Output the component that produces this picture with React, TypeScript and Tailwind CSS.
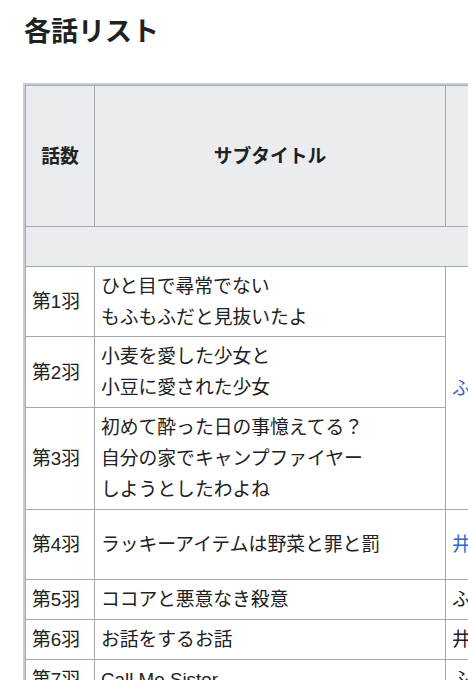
import React from 'react';

type Ep = {
    no: string;
    lines: string[];
    h: number;
};

const episodes: Ep[] = [
    { no: '第1羽', lines: ['ひと目で尋常でない', 'もふもふだと見抜いたよ'], h: 70 },
    { no: '第2羽', lines: ['小麦を愛した少女と', '小豆に愛された少女'], h: 71 },
    { no: '第3羽', lines: ['初めて酔った日の事憶えてる？', '自分の家でキャンプファイヤー', 'しようとしたわよね'], h: 102 },
    { no: '第4羽', lines: ['ラッキーアイテムは野菜と罪と罰'], h: 70 },
    { no: '第5羽', lines: ['ココアと悪意なき殺意'], h: 40 },
    { no: '第6羽', lines: ['お話をするお話'], h: 40 },
    { no: '第7羽', lines: ['Call Me Sister'], h: 40 },
];

// writer column, null where a rowspan above covers it
const writers: ({ name: string; link: boolean; span?: number } | null)[] = [
    { name: 'ふでやすかずゆき', link: true, span: 3 },
    null,
    null,
    { name: '井上美緒', link: true },
    { name: 'ふでやすかずゆき', link: false },
    { name: '井上美緒', link: false },
    { name: 'ふでやすかずゆき', link: false },
];

const cell = 'border border-[#a2a9b1] px-[6px] py-0 align-middle';

export default function App() {
    return (
        <div
            className="w-[468px] h-[680px] overflow-hidden bg-white text-[#202122]"
            style={{ fontFamily: '"Liberation Sans", "Noto Sans CJK JP", sans-serif' }}
        >
            {/* Section heading */}
            <h2 className="pl-[24px] pt-[14px] text-[27px] leading-[36px] font-bold">各話リスト</h2>

            {/* Episode table */}
            <div className="mt-[33px] ml-[23px] w-[724px] border-l-2 border-t-2 border-[#c8ccd1]">
                <table className="w-[721px] table-fixed border-collapse text-[18.8px] leading-[31px]">
                    <colgroup>
                        <col className="w-[69px]" />
                        <col className="w-[351px]" />
                        <col className="w-[150px]" />
                        <col className="w-[151px]" />
                    </colgroup>
                    <thead>
                        <tr className="bg-[#eaecf0]">
                            <th className={`${cell} h-[141px] text-center font-bold`}>話数</th>
                            <th className={`${cell} text-center font-bold`}>サブタイトル</th>
                            <th className={`${cell} text-center font-bold`}>脚本</th>
                            <th className={`${cell} text-center font-bold`}>絵コンテ</th>
                        </tr>
                        <tr className="bg-[#eaecf0]">
                            <th colSpan={4} className={`${cell} h-[40px]`} />
                        </tr>
                    </thead>
                    <tbody>
                        {episodes.map((ep, i) => {
                            const w = writers[i];
                            return (
                                <tr key={ep.no}>
                                    <td className={`${cell} whitespace-nowrap`} style={{ height: ep.h }}>
                                        {ep.no}
                                    </td>
                                    <td className={cell}>
                                        {ep.lines.map(l => (
                                            <div key={l} className="whitespace-nowrap">{l}</div>
                                        ))}
                                    </td>
                                    {w && (
                                        <td rowSpan={w.span ?? 1} className={`${cell} whitespace-nowrap ${w.link ? 'text-[#3366cc]' : ''}`}>
                                            {w.name}
                                        </td>
                                    )}
                                    <td className={`${cell} whitespace-nowrap`}>—</td>
                                </tr>
                            );
                        })}
                    </tbody>
                </table>
            </div>
        </div>
    );
}
